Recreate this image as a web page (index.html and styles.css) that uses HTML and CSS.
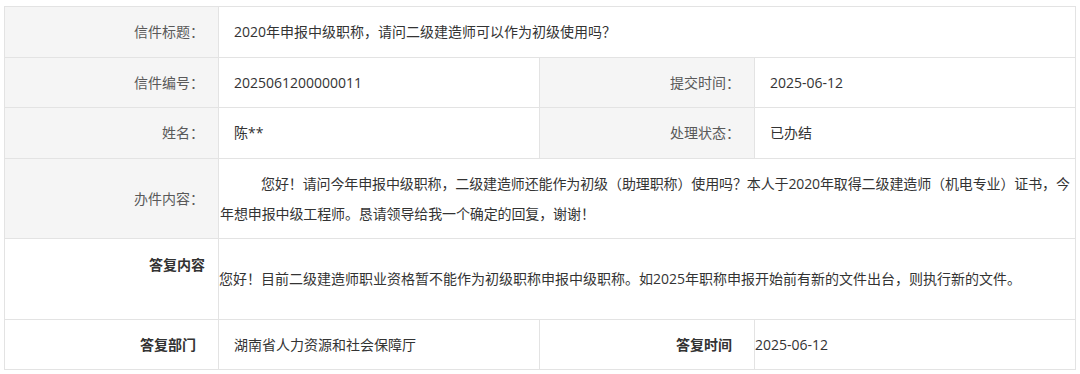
FILE: index.html
```html
<!DOCTYPE html>
<html lang="zh-CN">
<head>
<meta charset="utf-8">
<title>信件详情</title>
<link rel="stylesheet" href="styles.css">
</head>
<body>
<div class="wrap">
<table class="letter">
  <colgroup>
    <col class="c1"><col class="c2"><col class="c3"><col class="c4">
  </colgroup>
  <tr>
    <th class="lbl">信件标题：</th>
    <td class="val" colspan="3">2020年申报中级职称，请问二级建造师可以作为初级使用吗？</td>
  </tr>
  <tr class="short">
    <th class="lbl">信件编号：</th>
    <td class="val">2025061200000011</td>
    <th class="lbl">提交时间：</th>
    <td class="val">2025-06-12</td>
  </tr>
  <tr>
    <th class="lbl">姓名：</th>
    <td class="val">陈**</td>
    <th class="lbl">处理状态：</th>
    <td class="val">已办结</td>
  </tr>
  <tr class="short">
    <th class="lbl">办件内容：</th>
    <td class="body" colspan="3"><p class="para">您好！请问今年申报中级职称，二级建造师还能作为初级（助理职称）使用吗？本人于2020年取得二级建造师（机电专业）证书，今年想申报中级工程师。恳请领导给我一个确定的回复，谢谢！</p></td>
  </tr>
  <tr class="reply">
    <th class="bold top">答复内容</th>
    <td class="flat" colspan="3">您好！目前二级建造师职业资格暂不能作为初级职称申报中级职称。如2025年职称申报开始前有新的文件出台，则执行新的文件。</td>
  </tr>
  <tr class="short">
    <th class="bold">答复部门</th>
    <td class="val">湖南省人力资源和社会保障厅</td>
    <th class="bold">答复时间</th>
    <td class="flat">2025-06-12</td>
  </tr>
</table>
</div>
</body>
</html>
```

FILE: styles.css
```css
html, body {
  margin: 0;
  padding: 0;
  background: #ffffff;
}

body {
  font-family: "Open Sans", "Noto Sans CJK SC", sans-serif;
  font-size: 14px;
  color: #333333;
}

.wrap {
  padding: 6px 5px 0 4px;
}

.letter {
  border-collapse: collapse;
  table-layout: fixed;
  width: 1071px;
  border: 1px solid #e6e6e6;
}

.c1 { width: 214px; }
.c2 { width: 321px; }
.c3 { width: 215px; }
.c4 { width: 321px; }

.letter th,
.letter td {
  border: 1px solid #e3e3e3;
  height: 30px;
  line-height: 30px;
  padding: 10px 0;
  vertical-align: middle;
}

.letter .short th,
.letter .short td {
  padding-bottom: 9px;
}

.lbl {
  background: #f5f5f5;
  color: #595959;
  font-weight: normal;
  text-align: right;
  padding-right: 14px !important;
}

.val {
  text-align: left;
  padding-left: 15px !important;
  color: #333333;
}

.body {
  text-align: left;
  padding-left: 1px !important;
  padding-right: 0 !important;
}

.para {
  margin: 0;
  text-indent: 41px;
  line-height: 30px;
  letter-spacing: -0.12px;
  color: #333333;
}

.bold {
  background: #ffffff;
  color: #333333;
  font-weight: bold;
  text-align: right;
  padding-right: 22px !important;
}

.letter .reply td {
  height: 60px;
}

.letter .reply th.top {
  vertical-align: top;
  height: 59px;
  padding-top: 11px;
  padding-right: 13px !important;
}

.flat {
  text-align: left;
  padding-left: 0 !important;
  color: #333333;
}
```
